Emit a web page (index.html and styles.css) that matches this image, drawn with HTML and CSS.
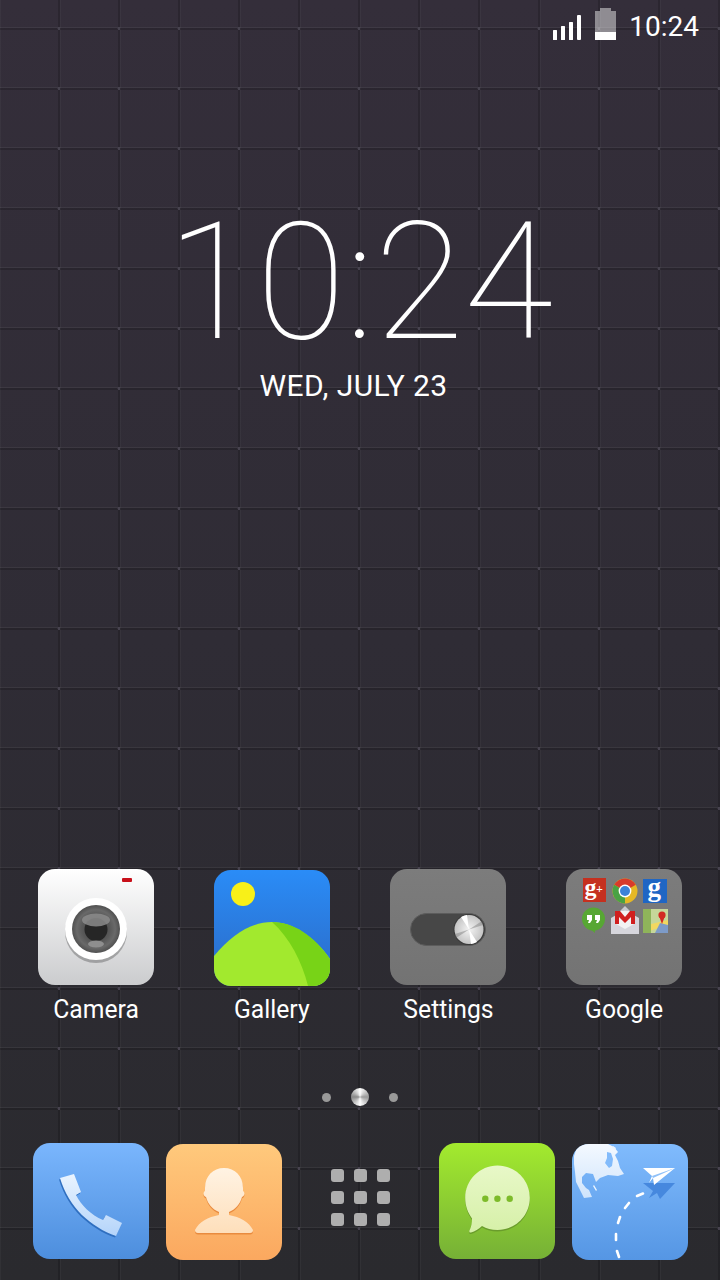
FILE: index.html
```html
<!DOCTYPE html>
<html lang="en">
<head>
    <meta charset="UTF-8">
    <meta name="viewport" content="width=device-width, initial-scale=1.0">
    <title>Home screen</title>
    <link rel="stylesheet" href="styles.css">
</head>
<body>

<div class="screen">
    <div class="status-bar">
        <svg class="signal" width="28" height="25" viewBox="0 0 28 25">
            <rect x="0" y="15" width="4" height="10" rx="0.5" fill="#fff"/>
            <rect x="8" y="11" width="4" height="14" rx="0.5" fill="#fff"/>
            <rect x="16" y="7" width="4" height="18" rx="0.5" fill="#fff"/>
            <rect x="24" y="0" width="4" height="25" rx="1" fill="#fff"/>
        </svg>
        <svg class="battery" width="21" height="32" viewBox="0 0 21 32">
            <path d="M5 0h11v3h5v29H0V3h5z" fill="#fff" fill-opacity="0.45"/>
            <rect x="0" y="24" width="21" height="8" fill="#fff"/>
        </svg>
        <span class="status-time">10:24</span>
    </div>

    <div class="clock">
        <div class="clock-time">10:24</div>
        <div class="clock-date">WED, JULY 23</div>
    </div>

    <div class="app-row">
        <div class="app">
            <svg class="icon" viewBox="0 0 116 116">
                <defs>
                    <linearGradient id="camBg" x1="0" y1="0" x2="0" y2="1">
                        <stop offset="0" stop-color="#ffffff"/>
                        <stop offset="1" stop-color="#cbccce"/>
                    </linearGradient>
                    <radialGradient id="lensBg" cx="0.5" cy="0.5" r="0.5">
                        <stop offset="0" stop-color="#3a3a3a"/>
                        <stop offset="0.6" stop-color="#5a5a5a"/>
                        <stop offset="0.8" stop-color="#696969"/>
                        <stop offset="1" stop-color="#505050"/>
                    </radialGradient>
                </defs>
                <rect width="116" height="116" rx="17" fill="url(#camBg)"/>
                <rect x="84" y="9" width="10" height="4" rx="1" fill="#c8101a"/>
                <circle cx="58" cy="63" r="31" fill="#000" fill-opacity="0.25"/>
                <circle cx="58" cy="60" r="31" fill="#fff"/>
                <circle cx="58" cy="60" r="24" fill="url(#lensBg)"/>
                <circle cx="58" cy="60.500" r="11.500" fill="#262626"/>
                <ellipse cx="58" cy="51" rx="14" ry="6.500" fill="#8c8c8c" fill-opacity="0.85"/>
                <ellipse cx="58" cy="75" rx="8" ry="3.500" fill="#8e8e8e"/>
            </svg>
            <span class="app-label">Camera</span>
        </div>
        <div class="app">
            <svg class="icon icon-low" viewBox="0 0 116 116">
                <defs>
                    <linearGradient id="galBg" x1="0" y1="0" x2="0" y2="1">
                        <stop offset="0" stop-color="#2a8cf7"/>
                        <stop offset="0.7" stop-color="#2b74d4"/>
                    </linearGradient>
                    <clipPath id="galClip"><rect width="116" height="116" rx="17"/></clipPath>
                </defs>
                <g clip-path="url(#galClip)">
                    <rect width="116" height="116" fill="url(#galBg)"/>
                    <path d="M0 86C18 64 38 52 58 52s42 14 58 37v27H0z" fill="#a2e92e"/>
                    <path d="M58 52c22 0 42 14 58 37v27H94C88 92 76 68 58 52z" fill="#78d317"/>
                </g>
                <circle cx="29" cy="24" r="12" fill="#f8f018"/>
            </svg>
            <span class="app-label">Gallery</span>
        </div>
        <div class="app">
            <svg class="icon" viewBox="0 0 116 116">
                <defs>
                    <linearGradient id="grayBg" x1="0" y1="0" x2="0" y2="1">
                        <stop offset="0" stop-color="#7c7c7c"/>
                        <stop offset="1" stop-color="#737373"/>
                    </linearGradient>
                    <radialGradient id="knob" cx="0.5" cy="0.5" r="0.5">
                        <stop offset="0" stop-color="#f4f4f4"/>
                        <stop offset="1" stop-color="#c4c4c4"/>
                    </radialGradient>
                </defs>
                <rect width="116" height="116" rx="17" fill="url(#grayBg)"/>
                <rect x="20.500" y="44.500" width="75" height="32" rx="16" fill="#474747" stroke="#5c5c5c" stroke-width="1"/>
                <circle cx="79" cy="60.500" r="15.500" fill="#3a3a3a"/>
                <circle cx="79" cy="60.500" r="14.500" fill="url(#knob)"/>
                <path d="M79 60.500L66 69a15 15 0 0 1-1-4zM79 60.500L92 52a15 15 0 0 1 1 4z" fill="#7a7a7a" fill-opacity="0.45"/>
                <path d="M79 60.500L71 48a15 15 0 0 1 6-2zM79 60.500L87 73a15 15 0 0 1-6 2z" fill="#fff"/>
            </svg>
            <span class="app-label">Settings</span>
        </div>
        <div class="app">
            <svg class="icon" viewBox="0 0 116 116">
                <rect width="116" height="116" rx="17" fill="url(#grayBg)"/>
                <!-- g+ -->
                <rect x="17" y="9" width="23" height="24" fill="#c5301f"/>
                <text class="mini-g" x="18.500" y="26" font-size="24" fill="#fff">g</text>
                <text class="mini-g" x="30" y="24" font-size="12" fill="#fff">+</text>
                <!-- chrome -->
                <circle cx="59" cy="22" r="12.500" fill="#e5b825"/>
                <path d="M59 22L48.200 15.800A12.500 12.500 0 0 1 69.800 15.800z" fill="#d93a2b"/>
                <path d="M59 22L48.200 15.800A12.500 12.500 0 0 0 59 34.500z" fill="#4aa244"/>
                <circle cx="59" cy="22" r="6.400" fill="#fff"/>
                <circle cx="59" cy="22" r="5" fill="#3d82d8"/>
                <!-- g -->
                <rect x="77" y="10" width="24" height="24" fill="#1f66c4"/>
                <text class="mini-g" x="81.500" y="27" font-size="27" fill="#fff">g</text>
                <!-- hangouts -->
                <circle cx="27.500" cy="50" r="11.500" fill="#57a733"/>
                <path d="M22 58l7 6v-5z" fill="#57a733"/>
                <path d="M21 46h5v5l-2 3h-2l1-3h-2zM29 46h5v5l-2 3h-2l1-3h-2z" fill="#fff"/>
                <!-- gmail -->
                <path d="M59 37l5 5-5 4-5-4z" fill="#c9c9cf"/>
                <path d="M45 49l14-8 14 8v16H45z" fill="#d6d6dc"/>
                <path d="M50 42h18v13l-9 5-9-5z" fill="#f2f2f2"/>
                <path d="M49 42h5l5 6 5-6h5v13h-4v-7l-6 6-6-6v7h-4z" fill="#d01f1f"/>
                <!-- maps -->
                <rect x="77" y="40" width="25" height="24" fill="#c6d79a"/>
                <path d="M77 57l25-6v5l-25 8z" fill="#f2d860"/>
                <path d="M77 40h8v24h-8z" fill="#8fb45a"/>
                <path d="M89 64l5-10 8 2v8z" fill="#7d9bc8"/>
                <circle cx="96" cy="46" r="3.600" fill="#d22a22"/>
                <path d="M93 47l3 8 3-8z" fill="#d22a22"/>
            </svg>
            <span class="app-label">Google</span>
        </div>
    </div>

    <div class="page-dots">
        <span class="dot"></span>
        <span class="dot dot-active"></span>
        <span class="dot"></span>
    </div>

    <div class="dock">
        <div class="dock-group">
            <svg class="icon" viewBox="0 0 116 116">
                <defs>
                    <linearGradient id="blueBg" x1="0" y1="0" x2="0" y2="1">
                        <stop offset="0" stop-color="#7ab6fd"/>
                        <stop offset="1" stop-color="#4d8edd"/>
                    </linearGradient>
                    <linearGradient id="phoneFill" x1="0" y1="0" x2="0" y2="1">
                        <stop offset="0" stop-color="#eaf4ff"/>
                        <stop offset="1" stop-color="#b4d4fa"/>
                    </linearGradient>
                </defs>
                <rect width="116" height="116" rx="17" fill="url(#blueBg)"/>
                <path d="M27 35L41 31 48 49 43 52C48 62 58 72 70 77L73 72 89 80 83 93C58 84 36 65 27 35z" fill="#2f6fc0" transform="translate(-1 1.500)"/>
                <path d="M27 35L41 31 48 49 43 52C48 62 58 72 70 77L73 72 89 80 83 93C58 84 36 65 27 35z" fill="url(#phoneFill)"/>
            </svg>
            <svg class="icon icon-low" viewBox="0 0 116 116">
                <defs>
                    <linearGradient id="orangeBg" x1="0" y1="0" x2="0" y2="1">
                        <stop offset="0" stop-color="#ffc97c"/>
                        <stop offset="1" stop-color="#fba85f"/>
                    </linearGradient>
                    <linearGradient id="personFill" x1="0" y1="0" x2="0" y2="1">
                        <stop offset="0" stop-color="#fff3e3"/>
                        <stop offset="1" stop-color="#fedfbb"/>
                    </linearGradient>
                </defs>
                <rect width="116" height="116" rx="17" fill="url(#orangeBg)"/>
                <path d="M58 24C69 24 77 32 77 44V47C79 48 79 52 76 53C74 60 70 65 63 68V71C74 73 83 78 87 86C87 88 86 89 84 89H32C30 89 29 88 29 86C33 78 42 73 53 71V68C46 65 42 60 40 53C37 52 37 48 39 47V44C39 32 47 24 58 24z" fill="#e98b3f" transform="translate(0 1.500)"/>
                <path d="M58 24C69 24 77 32 77 44V47C79 48 79 52 76 53C74 60 70 65 63 68V71C74 73 83 78 87 86C87 88 86 89 84 89H32C30 89 29 88 29 86C33 78 42 73 53 71V68C46 65 42 60 40 53C37 52 37 48 39 47V44C39 32 47 24 58 24z" fill="url(#personFill)"/>
            </svg>
        </div>

        <div class="all-apps">
            <span></span><span></span><span></span>
            <span></span><span></span><span></span>
            <span></span><span></span><span></span>
        </div>

        <div class="dock-group">
            <svg class="icon" viewBox="0 0 116 116">
                <defs>
                    <linearGradient id="greenBg" x1="0" y1="0" x2="0" y2="1">
                        <stop offset="0" stop-color="#a3ea2e"/>
                        <stop offset="1" stop-color="#76b036"/>
                    </linearGradient>
                    <linearGradient id="bubbleFill" x1="0" y1="0" x2="0" y2="1">
                        <stop offset="0" stop-color="#e8f8c8"/>
                        <stop offset="1" stop-color="#d6f0a8"/>
                    </linearGradient>
                </defs>
                <rect width="116" height="116" rx="17" fill="url(#greenBg)"/>
                <path d="M58.500 22.500c18 0 32.300 14.500 32.300 32.300S76.500 87 58.500 87c-6 0-11-1.500-15.500-4-3.500 3-7 5.500-11 6.500-1.500.300-2-1-1.500-2 2-4 2.500-8 2.500-12-4-5.500-6.800-12.300-6.800-20.700 0-17.800 14.500-32.300 32.300-32.300z" fill="#6a9c2c" transform="translate(0 1.500)"/>
                <path d="M58.500 22.500c18 0 32.300 14.500 32.300 32.300S76.500 87 58.500 87c-6 0-11-1.500-15.500-4-3.500 3-7 5.500-11 6.500-1.500.300-2-1-1.500-2 2-4 2.500-8 2.500-12-4-5.500-6.800-12.300-6.800-20.700 0-17.800 14.500-32.300 32.300-32.300z" fill="url(#bubbleFill)"/>
                <circle cx="46.300" cy="55.700" r="3.200" fill="#7dbb2a"/>
                <circle cx="58.400" cy="55.700" r="3.200" fill="#7dbb2a"/>
                <circle cx="70.700" cy="55.700" r="3.200" fill="#7dbb2a"/>
            </svg>
            <svg class="icon icon-low" viewBox="0 0 116 116">
                <defs>
                    <linearGradient id="travelBg" x1="0" y1="0" x2="0" y2="1">
                        <stop offset="0" stop-color="#80bbfd"/>
                        <stop offset="1" stop-color="#5596e4"/>
                    </linearGradient>
                    <linearGradient id="landFill" x1="0" y1="0" x2="0" y2="1">
                        <stop offset="0" stop-color="#f4f9ff"/>
                        <stop offset="1" stop-color="#cfe4fc"/>
                    </linearGradient>
                    <clipPath id="travelClip"><rect width="116" height="116" rx="17"/></clipPath>
                </defs>
                <g clip-path="url(#travelClip)">
                    <rect width="116" height="116" fill="url(#travelBg)"/>
                    <path d="M6 0H36L42 3 46 8 43 11 46 17 48 24 52 30 46 32 36 31 28 34 24 38 21 30 14 29 10 33 10 39 14 44 17 46 20 53 12 54 8 46 4 38 3 28 2 20 2 12 4 6z" fill="url(#landFill)"/>
                    <path d="M35 8L39 9 41 15 40 22 37 24 33 19 35 14z" fill="#82bbfb"/>
                    <path d="M22 41l3 5-1 1-3-5zM41 2l3 2-1 2-3-2z" fill="#eaf4fe"/>
                </g>
                <path d="M71 39h32L88 55l-3-6-8 5 4-7z" fill="#4688de"/>
                <path d="M71 24h32L82 41l-1-7-4 5 3-7z" fill="#fff"/>
                <path d="M80 32L103 24 81 34z" fill="#8fc0f8"/>
                <g stroke="#fff" stroke-width="2.600" stroke-linecap="round" fill="none">
                    <path d="M71 49.500l-6 2.500"/>
                    <path d="M57 59l-4 5"/>
                    <path d="M48 73l-2 6"/>
                    <path d="M44 90l0 6"/>
                    <path d="M45 107l2 6"/>
                </g>
            </svg>
        </div>
    </div>
</div>

</body>
</html>
```

FILE: styles.css
```css
* { box-sizing: border-box; }
html, body { margin: 0; padding: 0; }
body { font-family: Roboto, "Noto Sans", sans-serif; color: #fff; }

.screen {
    width: 720px;
    height: 1280px;
    overflow: hidden;
    display: flex;
    flex-direction: column;
    background-color: #2d2b32;
    background-image:
        radial-gradient(circle at 59px 28.5px, #47434f 1.2px, transparent 1.7px),
        linear-gradient(180deg, transparent 27px, rgba(255,255,255,.05) 27px, rgba(255,255,255,.05) 28px, rgba(0,0,0,.18) 28px, rgba(0,0,0,.18) 30px, transparent 30px),
        linear-gradient(90deg, rgba(255,255,255,.03) 0, rgba(255,255,255,.03) 1px, transparent 1px, transparent 58px, rgba(0,0,0,.18) 58px, rgba(0,0,0,.18) 60px),
        linear-gradient(180deg, #342e3a 0%, #2f2c35 50%, #2a2a2e 100%);
    background-size: 60px 60px, 60px 60px, 60px 60px, 100% 100%;
}

.status-bar {
    display: flex;
    align-items: flex-start;
    justify-content: flex-end;
    height: 50px;
    padding: 8px 21px 0 0;
}
.signal { margin: 7px 14px 0 0; }
.battery { margin-right: 13px; }
.status-time { font-size: 28px; line-height: 38px; }

.clock { text-align: center; margin-top: 148px; }
.clock-time { font-size: 163px; font-weight: 100; line-height: 170px; }
.clock-date { font-size: 30px; line-height: 34px; letter-spacing: 0.4px; margin-top: 1px; padding-right: 13px; }

.app-row {
    display: grid;
    grid-template-columns: repeat(4, 176px);
    padding: 0 8px;
    margin-top: auto;
}
.app { display: flex; flex-direction: column; align-items: center; }
.icon { display: block; width: 116px; height: 116px; overflow: visible; }
.icon-low { position: relative; top: 1px; }
.app-label { font-size: 26px; line-height: 34px; margin-top: 7px; transform: scaleX(.95); }
.mini-g { font-family: "Liberation Serif", serif; font-weight: bold; }

.page-dots {
    display: flex;
    align-items: center;
    justify-content: center;
    gap: 20px;
    height: 20px;
    margin-top: 61px;
}
.dot { width: 9px; height: 9px; border-radius: 50%; background: #999; }
.dot-active {
    width: 18px;
    height: 18px;
    background: conic-gradient(#fff, #999, #fff, #888, #fff);
}

.dock {
    display: flex;
    align-items: center;
    justify-content: space-between;
    padding: 0 32px 21px 33px;
    margin-top: 36px;
}
.dock-group { display: flex; gap: 17px; }
.all-apps {
    display: grid;
    grid-template-columns: repeat(3, 13px);
    gap: 9px 10px;
    margin-bottom: 7px;
}
.all-apps span { height: 13px; border-radius: 3px; background: #aeaeae; }
```
